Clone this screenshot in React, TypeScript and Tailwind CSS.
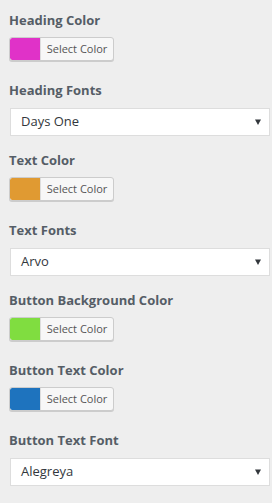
import React from "react";

const font = { fontFamily: '"Open Sans", "Noto Sans", sans-serif' };

type Field =
  | { kind: "color"; label: string; color: string }
  | { kind: "font"; label: string; value: string };

const fields: Field[] = [
  { kind: "color", label: "Heading Color", color: "#e032c8" },
  { kind: "font", label: "Heading Fonts", value: "Days One" },
  { kind: "color", label: "Text Color", color: "#e09a32" },
  { kind: "font", label: "Text Fonts", value: "Arvo" },
  { kind: "color", label: "Button Background Color", color: "#80dd40" },
  { kind: "color", label: "Button Text Color", color: "#1e73be" },
  { kind: "font", label: "Button Text Font", value: "Alegreya" },
];

const ColorButton = ({ color }: { color: string }) => (
  <button className="flex h-[24px] w-[105px] items-stretch overflow-hidden rounded-[3px] border border-[#cccccc] bg-[#f7f7f7] shadow-[0_1px_0_#cccccc] p-0">
    <span className="w-[30px] rounded-l-[2px]" style={{ backgroundColor: color }} />
    <span className="flex flex-1 items-center justify-center border-l border-[#dddddd] text-[11px] text-[#555555]">
      Select Color
    </span>
  </button>
);

const FontSelect = ({ value }: { value: string }) => (
  <div className="ml-px mr-[2px] flex h-[28px] items-center justify-between border border-[#dddddd] bg-white pl-[10px] pr-[8px]">
    <span className="text-[13px] text-[#32373c]">{value}</span>
    <svg width="6" height="6" viewBox="0 0 6 6">
      <path d="M0 0.5 H6 L3 6 Z" fill="#32373c" />
    </svg>
  </div>
);

export default function App() {
  return (
    <div className="min-h-[503px] w-[272px] bg-[#eeeeee] pl-[9px] pt-[11px]" style={font}>
      {fields.map((f) => (
        <div key={f.label} className="h-[70px]">
          <div className="h-[18px] text-[13px] font-bold leading-[18px] text-[#555d66]">
            {f.label}
          </div>
          {f.kind === "color" ? (
            <div className="mt-[8px]">
              <ColorButton color={f.color} />
            </div>
          ) : (
            <div className="mt-[9px]">
              <FontSelect value={f.value} />
            </div>
          )}
        </div>
      ))}
    </div>
  );
}
